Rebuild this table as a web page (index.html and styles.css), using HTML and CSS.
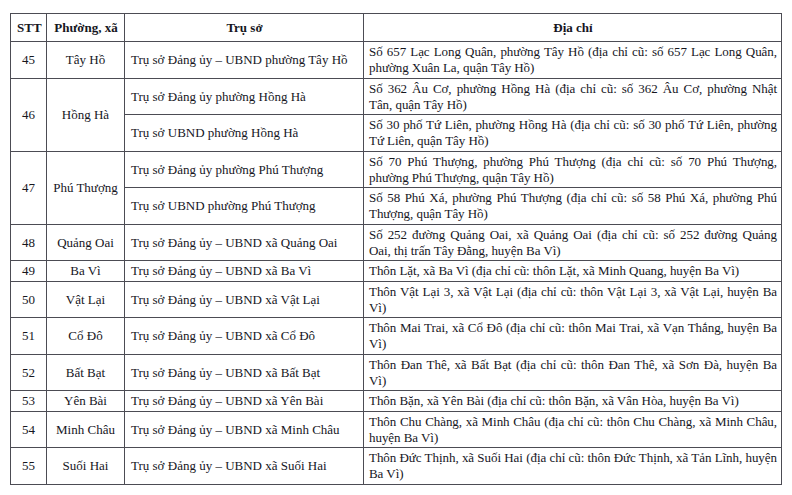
FILE: index.html
```html
<!DOCTYPE html>
<html lang="vi">
<head>
<meta charset="utf-8">
<title>Danh sách trụ sở</title>
<link rel="stylesheet" href="styles.css">
</head>
<body>
<table class="tbl">
  <colgroup>
    <col class="c-stt"><col class="c-name"><col class="c-hq"><col class="c-addr">
  </colgroup>
  <thead>
    <tr><th>STT</th><th>Phường, xã</th><th>Trụ sở</th><th>Địa chỉ</th></tr>
  </thead>
  <tbody>
    <tr>
      <td class="ctr">45</td><td class="ctr">Tây Hồ</td>
      <td>Trụ sở Đảng ủy – UBND phường Tây Hồ</td>
      <td class="addr"><span class="jl">Số 657 Lạc Long Quân, phường Tây Hồ (địa chỉ cũ: số 657 Lạc Long Quân,</span><span class="ln">phường Xuân La, quận Tây Hồ)</span></td>
    </tr>
    <tr>
      <td class="ctr" rowspan="2">46</td><td class="ctr" rowspan="2">Hồng Hà</td>
      <td>Trụ sở Đảng ủy phường Hồng Hà</td>
      <td class="addr"><span class="jl">Số 362 Âu Cơ, phường Hồng Hà (địa chỉ cũ: số 362 Âu Cơ, phường Nhật</span><span class="ln">Tân, quận Tây Hồ)</span></td>
    </tr>
    <tr>
      <td>Trụ sở UBND phường Hồng Hà</td>
      <td class="addr"><span class="jl">Số 30 phố Tứ Liên, phường Hồng Hà (địa chỉ cũ: số 30 phố Tứ Liên, phường</span><span class="ln">Tứ Liên, quận Tây Hồ)</span></td>
    </tr>
    <tr>
      <td class="ctr" rowspan="2">47</td><td class="ctr" rowspan="2">Phú Thượng</td>
      <td>Trụ sở Đảng ủy phường Phú Thượng</td>
      <td class="addr"><span class="jl">Số 70 Phú Thượng, phường Phú Thượng (địa chỉ cũ: số 70 Phú Thượng,</span><span class="ln">phường Phú Thượng, quận Tây Hồ)</span></td>
    </tr>
    <tr>
      <td>Trụ sở UBND phường Phú Thượng</td>
      <td class="addr"><span class="jl">Số 58 Phú Xá, phường Phú Thượng (địa chỉ cũ: số 58 Phú Xá, phường Phú</span><span class="ln">Thượng, quận Tây Hồ)</span></td>
    </tr>
    <tr>
      <td class="ctr">48</td><td class="ctr">Quảng Oai</td>
      <td>Trụ sở Đảng ủy – UBND xã Quảng Oai</td>
      <td class="addr"><span class="jl">Số 252 đường Quảng Oai, xã Quảng Oai (địa chỉ cũ: số 252 đường Quảng</span><span class="ln">Oai, thị trấn Tây Đằng, huyện Ba Vì)</span></td>
    </tr>
    <tr>
      <td class="ctr">49</td><td class="ctr">Ba Vì</td>
      <td>Trụ sở Đảng ủy – UBND xã Ba Vì</td>
      <td class="addr"><span class="ln">Thôn Lặt, xã Ba Vì (địa chỉ cũ: thôn Lặt, xã Minh Quang, huyện Ba Vì)</span></td>
    </tr>
    <tr>
      <td class="ctr">50</td><td class="ctr">Vật Lại</td>
      <td>Trụ sở Đảng ủy – UBND xã Vật Lại</td>
      <td class="addr"><span class="jl">Thôn Vật Lại 3, xã Vật Lại (địa chỉ cũ: thôn Vật Lại 3, xã Vật Lại, huyện Ba</span><span class="ln">Vì)</span></td>
    </tr>
    <tr>
      <td class="ctr">51</td><td class="ctr">Cổ Đô</td>
      <td>Trụ sở Đảng ủy – UBND xã Cổ Đô</td>
      <td class="addr"><span class="jl">Thôn Mai Trai, xã Cổ Đô (địa chỉ cũ: thôn Mai Trai, xã Vạn Thắng, huyện Ba</span><span class="ln">Vì)</span></td>
    </tr>
    <tr>
      <td class="ctr">52</td><td class="ctr">Bất Bạt</td>
      <td>Trụ sở Đảng ủy – UBND xã Bất Bạt</td>
      <td class="addr"><span class="jl">Thôn Đan Thê, xã Bất Bạt (địa chỉ cũ: thôn Đan Thê, xã Sơn Đà, huyện Ba</span><span class="ln">Vì)</span></td>
    </tr>
    <tr>
      <td class="ctr">53</td><td class="ctr">Yên Bài</td>
      <td>Trụ sở Đảng ủy – UBND xã Yên Bài</td>
      <td class="addr"><span class="ln">Thôn Bặn, xã Yên Bài (địa chỉ cũ: thôn Bặn, xã Vân Hòa, huyện Ba Vì)</span></td>
    </tr>
    <tr>
      <td class="ctr">54</td><td class="ctr">Minh Châu</td>
      <td>Trụ sở Đảng ủy – UBND xã Minh Châu</td>
      <td class="addr"><span class="jl">Thôn Chu Chàng, xã Minh Châu (địa chỉ cũ: thôn Chu Chàng, xã Minh Châu,</span><span class="ln">huyện Ba Vì)</span></td>
    </tr>
    <tr>
      <td class="ctr">55</td><td class="ctr">Suối Hai</td>
      <td>Trụ sở Đảng ủy – UBND xã Suối Hai</td>
      <td class="addr"><span class="jl">Thôn Đức Thịnh, xã Suối Hai (địa chỉ cũ: thôn Đức Thịnh, xã Tản Lĩnh, huyện</span><span class="ln">Ba Vì)</span></td>
    </tr>
  </tbody>
</table>
</body>
</html>
```

FILE: styles.css
```css
html, body {
  margin: 0;
  padding: 0;
  background: #ffffff;
}

body {
  padding: 13px 0 0 10px;
  font-family: "Liberation Serif", "Times New Roman", serif;
  font-size: 13px;
  color: #16161e;
}

.tbl {
  border-collapse: collapse;
  table-layout: fixed;
  width: 771px;
}

.c-stt { width: 36px; }
.c-name { width: 78px; }
.c-hq { width: 239px; }
.c-addr { width: 418px; }

.tbl th,
.tbl td {
  border: 1px solid #4c4c54;
  line-height: 16px;
  padding: 2px 5px 1.5px 6px;
  vertical-align: middle;
  text-align: left;
  white-space: nowrap;
  overflow: hidden;
}

.tbl th {
  font-weight: bold;
  text-align: center;
  height: 17px;
  padding-top: 5px;
  padding-bottom: 5px;
}

.tbl td.ctr {
  text-align: center;
  padding-left: 2px;
  padding-right: 2px;
}

.tbl td.addr {
  padding-left: 5px;
  padding-right: 4px;
  letter-spacing: -0.05px;
}

.addr .jl,
.addr .ln {
  display: block;
}

.addr .jl {
  text-align: justify;
  text-align-last: justify;
}
```
